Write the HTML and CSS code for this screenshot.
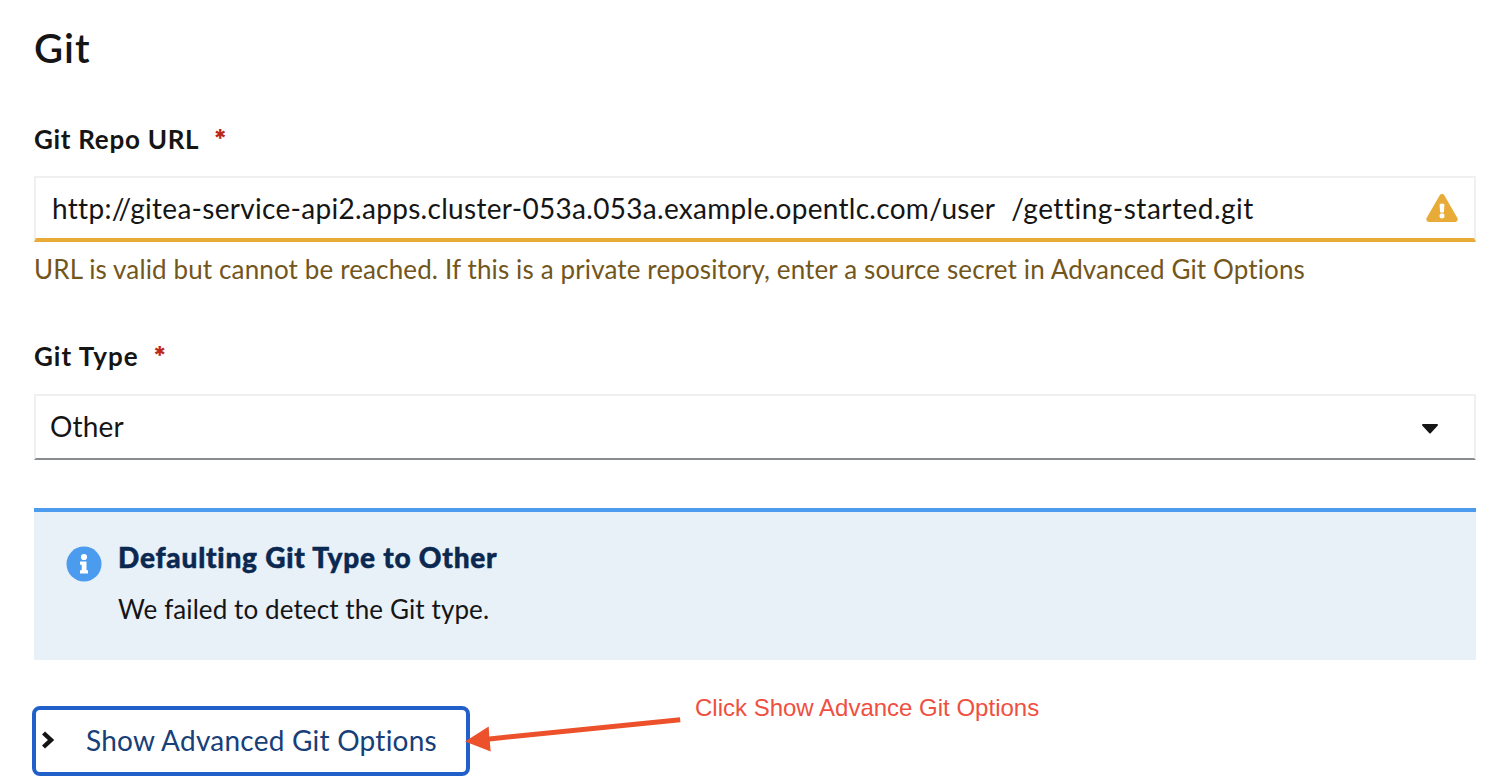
FILE: index.html
```html
<!DOCTYPE html>
<html lang="en">
<head>
<meta charset="utf-8">
<title>Git</title>
<link rel="stylesheet" href="styles.css">
</head>
<body>
<main class="form">
  <h1 class="title"><span>Git</span></h1>
  <div class="label"><span class="repo-label">Git Repo URL</span><span class="required">*</span></div>
  <div class="field warning">
    <span class="url"><span class="url-host">http://gitea-service-api2.apps.cluster-053a.053a.example.opentlc.com/user</span><span class="url-path">/getting-started.git</span></span>
    <svg class="warning-icon" viewBox="0 0 576 512"><path fill="#e8ab38" d="M569.5 440c18.500 32-4.700 72-41.600 72H48.100c-36.900 0-60-40.100-41.600-72L246.400 24c18.500-32 64.700-32 83.200 0l239.900 416zM288 354a46 46 0 1 0 0 92 46 46 0 0 0 0-92zm-43.700-165.300l7.400 136c.400 6.400 5.600 11.300 12 11.300h48.500c6.400 0 11.600-5 12-11.300l7.400-136c.400-6.900-5.100-12.700-12-12.700h-63.400c-6.900 0-12.400 5.800-11.900 12.700z"/></svg>
  </div>
  <p class="helper"><span>URL is valid but cannot be reached. If this is a private repository, enter a source secret in Advanced Git Options</span></p>
  <div class="label label-type"><span class="type-label">Git Type</span><span class="required">*</span></div>
  <div class="field select">
    <span class="value">Other</span>
    <svg class="caret" viewBox="0 0 16 10"><path fill="#151515" d="M1.200 0h13.600c1.100 0 1.500 1 .8 1.700L8.900 9a1.200 1.200 0 0 1-1.800 0L.4 1.700C-.3 1 .1 0 1.200 0z"/></svg>
  </div>
  <section class="alert">
    <svg class="info-icon" viewBox="0 0 36 36"><circle cx="18" cy="18" r="17.500" fill="#4b9bee"/><circle cx="18" cy="11" r="3.100" fill="#fff"/><path fill="#fff" d="M14 15.500h6.500v8.800H22v3.200h-8v-3.200h1.700v-5.600H14z"/></svg>
    <div class="alert-body">
      <h2 class="alert-title"><span>Defaulting Git Type to Other</span></h2>
      <p class="alert-text"><span>We failed to detect the Git type.</span></p>
    </div>
  </section>
  <div class="footer">
    <button class="toggle" type="button">
      <svg class="chevron" viewBox="0 0 12 18"><path fill="none" stroke="#151515" stroke-width="4.400" d="M1.500 2 9 9l-7.500 7"/></svg>
      <span class="toggle-text">Show Advanced Git Options</span>
    </button>
    <span class="note">Click Show Advance Git Options</span>
    <svg class="arrow" viewBox="0 0 220 40"><path fill="#ec512c" d="M0 25.500 23.700 10.500l.6 9.900L215 1.300l.4 4.900L24.800 25.400l.9 10.100z"/></svg>
  </div>
</main>
</body>
</html>
```
FILE: styles.css
```css
* { box-sizing: border-box; margin: 0; padding: 0; }
body {
  height: 780px;
  overflow: hidden;
  background: #fff;
  color: #151515;
  font-family: Lato, sans-serif;
  font-size: 26px;
  font-variant-ligatures: none;
  white-space: nowrap;
}
svg { display: block; flex: none; }
.form { width: 1476px; padding: 22px 0 0 34px; }
.title { height: 52px; font-size: 40px; font-weight: 600; line-height: 52px; letter-spacing: 1.1px; }
.label { display: flex; height: 40px; margin-top: 45px; font-weight: 700; line-height: 40px; }
.label-type { margin-top: 47px; }
.repo-label { letter-spacing: .72px; }
.type-label { letter-spacing: 1.05px; }
.required { margin-left: 14px; color: #bd271a; font-family: Inter, sans-serif; font-size: 24px; font-weight: 800; }
.field {
  display: flex;
  align-items: center;
  justify-content: space-between;
  height: 66px;
  margin-top: 17px;
  border: 2px solid #f0f0f0;
  font-size: 28px;
}
.warning { padding: 0 16px; border-bottom: 4px solid #e8ab38; }
.url { display: flex; }
.url-host { letter-spacing: .3px; }
.url-path { margin-left: 16px; letter-spacing: .5px; }
.warning-icon { width: 32px; height: 28px; }
.helper { height: 40px; margin-top: 7px; line-height: 40px; color: #73561c; letter-spacing: .13px; }
.label-type { padding-top: 0; height: 41px; }
.select { padding: 0 36px 0 14px; border-bottom-color: #8a8d90; }
.value { padding-bottom: 2px; letter-spacing: .2px; }
.caret { width: 16px; height: 10px; margin-top: 4px; }
.alert {
  display: flex;
  height: 152px;
  margin-top: 48px;
  padding: 25px 32px;
  border-top: 4px solid #4b9bee;
  background: #e8f0f8;
}
.info-icon { width: 36px; height: 36px; margin-top: 9px; }
.alert-body { margin-left: 16px; }
.alert-title {
  height: 42px;
  color: #0a2850;
  font-size: 28px;
  font-weight: 900;
  line-height: 40px;
  letter-spacing: .78px;
  -webkit-text-stroke: .5px #0a2850;
}
.alert-text { height: 40px; margin-top: 10px; line-height: 40px; letter-spacing: .1px; }
.footer { position: relative; display: flex; align-items: flex-start; margin: 46px 0 0 -2px; }
.toggle {
  display: flex;
  align-items: center;
  width: 438px;
  height: 70px;
  padding-left: 6px;
  border: 4px solid #2160c8;
  border-radius: 8px;
  background: #fff;
  color: #174078;
  font-family: inherit;
  font-size: 28px;
}
.chevron { width: 12px; height: 18px; margin-bottom: 2px; }
.toggle-text { margin-left: 32px; padding-bottom: 2px; letter-spacing: .24px; }
.note {
  margin: -14px 0 0 225px;
  color: #ef4f40;
  font-family: "Liberation Sans", Arial, sans-serif;
  font-size: 24px;
  line-height: 32px;
}
.arrow { position: absolute; top: 10px; left: 433px; width: 220px; height: 40px; }
```
